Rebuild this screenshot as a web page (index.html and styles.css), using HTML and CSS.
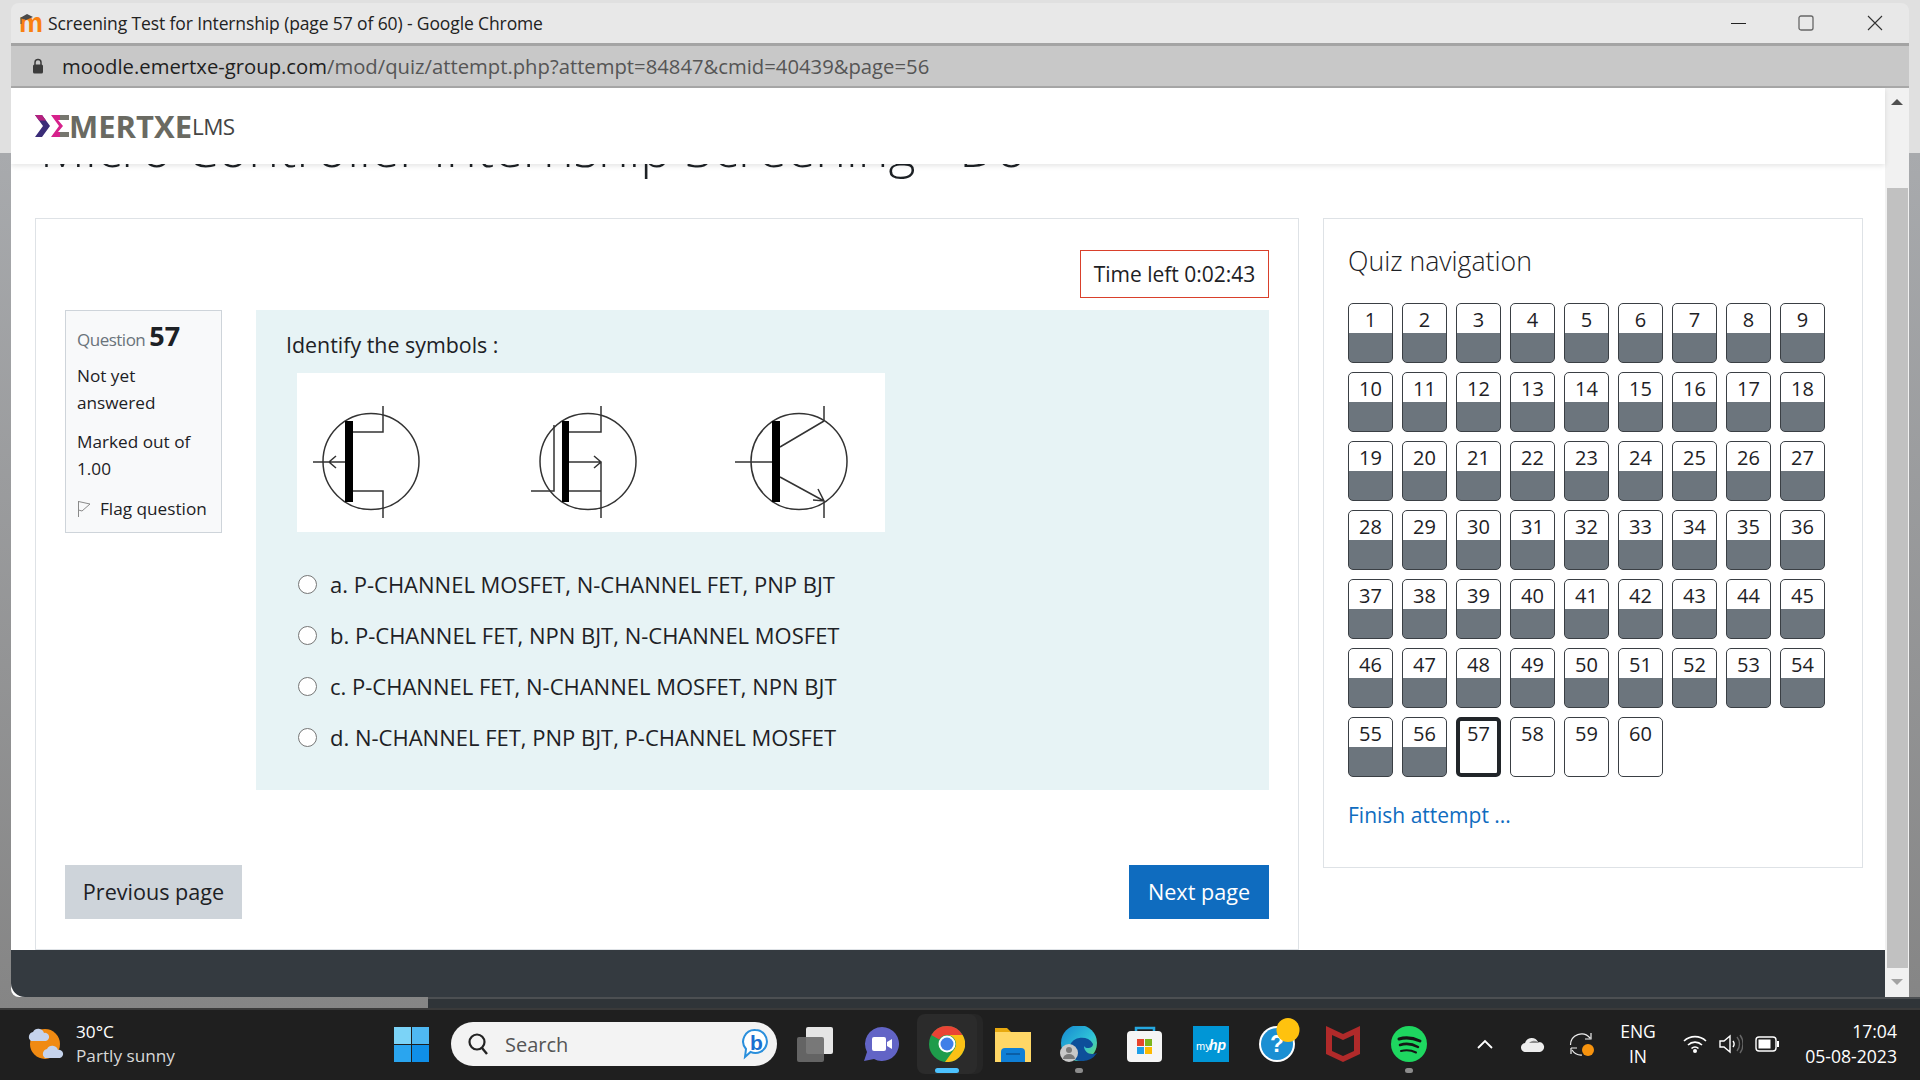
FILE: index.html
```html
<!DOCTYPE html>
<html>
<head>
	<meta http-equiv="Content-Type" content="text/html;charset=utf-8"/>
	<title>Screening Test for Internship (page 57 of 60)</title>
	<link rel="stylesheet" href="styles.css">
</head>
<body>
	<div class="window">
		<div class="titlebar">
			<svg class="favicon" width="24" height="22" viewBox="0 0 24 22">
				<text x="0" y="20" font-family="Liberation Sans" font-weight="700" font-size="27" fill="#f98012">m</text>
				<path d="M1 6l7-4 6 3-7 3z" fill="#4a4a4a"/>
				<path d="M2 6v6" stroke="#4a4a4a" stroke-width="1"/>
			</svg>
			<span class="title-text">Screening Test for Internship (page 57 of 60) - Google Chrome</span>
			<svg class="win-min" width="15" height="15" viewBox="0 0 15 15"><path d="M0 7.500h15" stroke="#222" stroke-width="1"/></svg>
			<svg class="win-max" width="16" height="16" viewBox="0 0 16 16"><rect x="1" y="1" width="14" height="14" rx="2" fill="none" stroke="#666" stroke-width="1.300"/></svg>
			<svg class="win-close" width="16" height="16" viewBox="0 0 16 16"><path d="M1 1l14 14M15 1L1 15" stroke="#333" stroke-width="1.100"/></svg>
		</div>
		<div class="addressbar">
			<svg width="12" height="16" viewBox="0 0 12 16"><path d="M3 7V4.500a3 3 0 0 1 6 0V7" fill="none" stroke="#3c3c3c" stroke-width="1.500"/><rect x="1" y="6.500" width="10" height="9" rx="1.500" fill="#3c3c3c"/></svg>
			<span class="url"><span class="url-host">moodle.emertxe-group.com</span>/mod/quiz/attempt.php?attempt=84847&amp;cmid=40439&amp;page=56</span>
		</div>
		<div class="viewport">
			<div class="page">
				<div class="header">
					<svg width="34" height="24" viewBox="0 0 34 24">
						<path d="M0 1h7l8 11-8 11H0l8-11z" fill="#3a2c78"/>
						<path d="M0 1h7l4 5.500H4z" fill="#b5217f"/>
						<path d="M16 1h18v5h-11l5 6-5 6h11v5H16l8-11z" fill="#d6228c"/>
						<path d="M25 1h9v5h-9zM25 18h9v5h-9z" fill="#77776f"/>
					</svg>
					<span class="logo-name">MERTXE</span><span class="logo-lms">LMS</span>
				</div>
				<div class="content">
					<h1 class="course-title">Micro Controller Internship Screening - Do</h1>
					<div class="columns">
						<div class="quiz-card">
							<div class="timer-row"><div class="timer">Time left 0:02:43</div></div>
							<div class="question">
								<div class="q-info">
									<div class="q-no">Question <b>57</b></div>
									<div class="q-state">Not yet answered</div>
									<div class="q-grade">Marked out of 1.00</div>
									<div class="q-flag">
										<svg width="14" height="18" viewBox="0 0 14 18"><path d="M1.500 1v16M1.500 1.500L13 4 5 11 1.500 10" fill="none" stroke="#8a8a8a" stroke-width="1"/></svg>
										Flag question
									</div>
								</div>
								<div class="q-body">
									<div class="q-text">Identify the symbols :</div>
									<svg class="symbols" width="588" height="159" viewBox="0 0 588 159">
										<g fill="none" stroke="#333" stroke-width="1.500">
											<circle cx="74" cy="88.500" r="48"/>
											<path d="M56 59h30V33M56 118h30v27M16 89h32M39 83l-7 6 7 6"/>
											<circle cx="291" cy="88.500" r="48"/>
											<path d="M271 59h33V33M271 89h33M297 83l7 6-7 6M304 89v56M271 118h33M234 118h23V52"/>
											<circle cx="502" cy="88.500" r="48"/>
											<path d="M438 89h37M483 74l44-26M527 33v15M483 104l44 24M527 128v17M521 116l6 12-11-1"/>
										</g>
										<rect x="48" y="48" width="8" height="81" fill="#000"/>
										<rect x="265" y="48" width="7" height="81" fill="#000"/>
										<rect x="475" y="48" width="8" height="81" fill="#000"/>
									</svg>
									<div class="answers">
										<label class="answer"><span class="radio"></span>a. P-CHANNEL MOSFET, N-CHANNEL FET, PNP BJT</label>
										<label class="answer"><span class="radio"></span>b. P-CHANNEL FET, NPN BJT, N-CHANNEL MOSFET</label>
										<label class="answer"><span class="radio"></span>c. P-CHANNEL FET, N-CHANNEL MOSFET, NPN BJT</label>
										<label class="answer"><span class="radio"></span>d. N-CHANNEL FET, PNP BJT, P-CHANNEL MOSFET</label>
									</div>
								</div>
							</div>
							<div class="page-buttons">
								<a class="btn btn-prev">Previous page</a>
								<a class="btn btn-next">Next page</a>
							</div>
						</div>
						<div class="nav-card">
							<div class="nav-title">Quiz navigation</div>
							<div class="nav-grid">
								<span class="qn seen">1</span><span class="qn seen">2</span><span class="qn seen">3</span><span class="qn seen">4</span><span class="qn seen">5</span><span class="qn seen">6</span><span class="qn seen">7</span><span class="qn seen">8</span><span class="qn seen">9</span>
								<span class="qn seen">10</span><span class="qn seen">11</span><span class="qn seen">12</span><span class="qn seen">13</span><span class="qn seen">14</span><span class="qn seen">15</span><span class="qn seen">16</span><span class="qn seen">17</span><span class="qn seen">18</span>
								<span class="qn seen">19</span><span class="qn seen">20</span><span class="qn seen">21</span><span class="qn seen">22</span><span class="qn seen">23</span><span class="qn seen">24</span><span class="qn seen">25</span><span class="qn seen">26</span><span class="qn seen">27</span>
								<span class="qn seen">28</span><span class="qn seen">29</span><span class="qn seen">30</span><span class="qn seen">31</span><span class="qn seen">32</span><span class="qn seen">33</span><span class="qn seen">34</span><span class="qn seen">35</span><span class="qn seen">36</span>
								<span class="qn seen">37</span><span class="qn seen">38</span><span class="qn seen">39</span><span class="qn seen">40</span><span class="qn seen">41</span><span class="qn seen">42</span><span class="qn seen">43</span><span class="qn seen">44</span><span class="qn seen">45</span>
								<span class="qn seen">46</span><span class="qn seen">47</span><span class="qn seen">48</span><span class="qn seen">49</span><span class="qn seen">50</span><span class="qn seen">51</span><span class="qn seen">52</span><span class="qn seen">53</span><span class="qn seen">54</span>
								<span class="qn seen">55</span><span class="qn seen">56</span><span class="qn current">57</span><span class="qn">58</span><span class="qn">59</span><span class="qn">60</span>
							</div>
							<a class="finish">Finish attempt ...</a>
						</div>
					</div>
				</div>
				<div class="footer"></div>
			</div>
			<div class="scrollbar">
				<div class="scroll-up"><span class="arrow-up"></span></div>
				<div class="scroll-thumb"></div>
				<div class="scroll-down"><span class="arrow-down"></span></div>
			</div>
		</div>
	</div>
	<div class="strip"></div>
	<div class="taskbar">
		<svg class="weather-icon" width="38" height="34" viewBox="0 0 38 34">
			<ellipse cx="17" cy="17" rx="15" ry="15" fill="#f08a12"/>
			<path d="M3 14a5 5 0 0 1 2-9 6 6 0 0 1 11 1 4 4 0 0 1 2 8z" fill="#c5d3ec"/>
			<path d="M17 31a5 5 0 0 1 2-9 6 6 0 0 1 11 1 4 4 0 0 1 2 8z" fill="#c5d3ec"/>
		</svg>
		<div class="weather-text">
			<div class="temp">30°C</div>
			<div class="sky">Partly sunny</div>
		</div>
		<svg class="start" width="35" height="35" viewBox="0 0 35 35">
			<rect width="17" height="17" fill="#7bd3f7"/><rect x="18" width="17" height="17" fill="#4fb8f2"/>
			<rect y="18" width="17" height="17" fill="#2aa5ef"/><rect x="18" y="18" width="17" height="17" fill="#0f8fe8"/>
		</svg>
		<div class="search">
			<svg width="22" height="24" viewBox="0 0 22 24"><circle cx="10" cy="10" r="7.500" fill="none" stroke="#222" stroke-width="2.200"/><path d="M15 16l5 6" stroke="#222" stroke-width="2.400"/></svg>
			<span class="search-text">Search</span>
			<svg class="bing" width="27" height="32" viewBox="0 0 27 32">
				<path d="M13.500 2a11.500 11.500 0 1 1-5 21.900L3 29l1-8A11.500 11.500 0 0 1 13.500 2z" fill="#fff" stroke="#2a8fdc" stroke-width="2"/>
				<text x="8" y="22" font-family="Liberation Sans" font-weight="700" font-size="21" fill="#1b6fd0">b</text>
			</svg>
		</div>
		<div class="slot">
			<svg width="36" height="36" viewBox="0 0 36 36"><rect x="9" y="1" width="27" height="27" rx="2" fill="#e6e6e6"/><rect y="11" width="27" height="25" rx="2" fill="#6b6b6b" opacity=".9"/></svg>
		</div>
		<div class="slot">
			<svg width="36" height="36" viewBox="0 0 36 36"><path d="M19 1a17 17 0 1 1-8 32l-10 2 3-9A17 17 0 0 1 19 1z" fill="#6264c6"/><rect x="9" y="11" width="14" height="14" rx="2" fill="#fff"/><path d="M24 16l5-3v10l-5-3z" fill="#fff"/></svg>
		</div>
		<div class="slot slot-active">
			<svg width="36" height="36" viewBox="0 0 36 36">
				<circle cx="18" cy="18" r="18" fill="#1e9c4b"/>
				<path d="M33.600 9A18 18 0 0 1 16 35.900L25.800 22.500A9 9 0 0 0 18 9z" fill="#fbc116"/>
				<path d="M18 0a18 18 0 0 1 15.600 9H18a9 9 0 0 0-7.800 4.500L2.400 9A18 18 0 0 1 18 0z" fill="#ea4335"/>
				<circle cx="18" cy="18" r="8.500" fill="#fff"/><circle cx="18" cy="18" r="6.500" fill="#3f7fe8"/>
			</svg>
			<span class="dot dot-on"></span>
		</div>
		<div class="slot">
			<svg width="36" height="36" viewBox="0 0 36 36"><path d="M0 2h12l4 4h20v30H0z" fill="#e8a90f"/><rect y="6" width="36" height="30" fill="#ffd766"/><path d="M6 36V26a4 4 0 0 1 4-4h16a4 4 0 0 1 4 4v10z" fill="#0f7fd6"/><rect x="11" y="27" width="14" height="2" fill="#0a5ea6"/></svg>
		</div>
		<div class="slot">
			<svg width="38" height="36" viewBox="0 0 38 36">
				<defs><linearGradient id="edge" x1="0" y1="0" x2="1" y2="1"><stop offset="0" stop-color="#1585d0"/><stop offset=".6" stop-color="#30c5d8"/><stop offset="1" stop-color="#72dc5f"/></linearGradient></defs>
				<circle cx="19" cy="17" r="18" fill="url(#edge)"/>
				<path d="M10 20a12 10 0 0 1 23-2c0 5-8 5-9 2 0 6 6 10 13 7a18 18 0 0 1-16 8C13 35 8 27 10 20z" fill="#0d4f9a"/>
				<circle cx="9" cy="27" r="9" fill="#c9c9c9"/><circle cx="9" cy="24" r="3" fill="#7a7a7a"/><path d="M3 33a6 5 0 0 1 12 0z" fill="#7a7a7a"/>
			</svg>
			<span class="dot"></span>
		</div>
		<div class="slot">
			<svg width="36" height="36" viewBox="0 0 36 36"><path d="M9 8V2h18v6" fill="none" stroke="#25a8e0" stroke-width="2.500"/><rect y="5" width="35" height="31" rx="4" fill="#f5f5f5"/><rect x="10" y="13" width="7" height="7" fill="#e8452c"/><rect x="18" y="13" width="7" height="7" fill="#7cb51c"/><rect x="10" y="21" width="7" height="7" fill="#1e9fe8"/><rect x="18" y="21" width="7" height="7" fill="#fdb900"/></svg>
		</div>
		<div class="slot">
			<svg width="36" height="36" viewBox="0 0 36 36"><rect width="36" height="36" fill="#0096d6"/><text x="3" y="24" font-family="Liberation Sans" font-size="11" fill="#fff">my</text><text x="16" y="24" font-family="Liberation Sans" font-style="italic" font-weight="700" font-size="14" fill="#fff">hp</text></svg>
		</div>
		<div class="slot slot-help">
			<svg width="48" height="44" viewBox="0 0 48 44">
				<circle cx="24" cy="26" r="18" fill="#fff"/><circle cx="24" cy="26" r="16" fill="#1b8fd3"/>
				<text x="17" y="34" font-family="Liberation Sans" font-weight="700" font-size="23" fill="#fff">?</text>
				<ellipse cx="35" cy="12" rx="11.500" ry="12" fill="#ffc20e"/>
			</svg>
		</div>
		<div class="slot">
			<svg width="34" height="36" viewBox="0 0 34 36"><path fill-rule="evenodd" d="M0 0l17 8 17-8v28l-17 8-17-8zM6 9v16l11 5 11-5V9l-11 5z" fill="#b02a2a"/></svg>
		</div>
		<div class="slot">
			<svg width="36" height="36" viewBox="0 0 36 36"><circle cx="18" cy="18" r="18" fill="#1ed760"/><g fill="none" stroke="#151515" stroke-linecap="round"><path d="M8 13q10-3 21 2" stroke-width="3"/><path d="M9 19q9-3 18 2" stroke-width="2.500"/><path d="M10 25q8-2 15 1.500" stroke-width="2"/></g></svg>
			<span class="dot"></span>
		</div>
		<svg class="tray-up" width="16" height="10" viewBox="0 0 16 10"><path d="M1 9l7-7 7 7" fill="none" stroke="#fff" stroke-width="1.800"/></svg>
		<svg class="tray-cloud" width="24" height="16" viewBox="0 0 24 16"><path d="M5 16a4.500 4.500 0 0 1-1-9 7 7 0 0 1 13-1 5 5 0 0 1 2 10z" fill="#ededed"/><path d="M8 7a7 7 0 0 1 9-1 5 5 0 0 1 2 1z" fill="#8c8c8c"/></svg>
		<svg class="tray-sync" width="25" height="24" viewBox="0 0 25 24"><g fill="none" stroke="#eee" stroke-width="1.200"><path d="M1.500 13A11 11 0 0 1 21 6M22 1v6h-6"/><path d="M2 16v6M2 16h6"/><path d="M3 18a11 11 0 0 0 10 5"/></g><circle cx="19" cy="18" r="6" fill="#f7930e"/></svg>
		<div class="tray-lang"><div>ENG</div><div>IN</div></div>
		<svg class="tray-wifi" width="24" height="18" viewBox="0 0 24 18"><g fill="none" stroke="#fff" stroke-width="1.600"><path d="M1 6a16 16 0 0 1 22 0"/><path d="M5 10a10 10 0 0 1 14 0"/><path d="M8.500 13.500a5 5 0 0 1 7 0"/></g><circle cx="12" cy="16" r="2" fill="#fff"/></svg>
		<svg class="tray-vol" width="24" height="20" viewBox="0 0 24 20"><path d="M1 7h4l6-5v16l-6-5H1z" fill="none" stroke="#fff" stroke-width="1.400"/><path d="M14 7a5 5 0 0 1 0 6" fill="none" stroke="#fff" stroke-width="1.400"/><path d="M18 3a11 11 0 0 1 0 14M21 1a15 15 0 0 1 0 18" fill="none" stroke="#666" stroke-width="1.400"/></svg>
		<svg class="tray-bat" width="24" height="16" viewBox="0 0 24 16"><rect x="1" y="1" width="20" height="14" rx="3" fill="none" stroke="#fff" stroke-width="1.400"/><rect x="3.500" y="3.500" width="12" height="9" fill="#fff"/><rect x="22" y="5" width="2" height="6" fill="#fff"/></svg>
		<div class="clock"><div>17:04</div><div>05-08-2023</div></div>
	</div>
</body>
</html>
```

FILE: styles.css
```css
*{
	margin: 0;
	padding: 0;
	box-sizing: border-box;
	text-decoration: none;
}
body{
	width: 1920px;
	height: 1080px;
	overflow: hidden;
	display: flex;
	flex-direction: column;
	font-family: "Open Sans", "Noto Sans", sans-serif;
	color: #1d2125;
	background: linear-gradient(#e0e0e0 0, #e0e0e0 153px, #a8aaad 153px, #858585 1008px);
}
.window{
	height: 994px;
	margin: 3px 11px 0 11px;
	display: flex;
	flex-direction: column;
	border-radius: 8px 8px 0 8px;
	overflow: hidden;
}
.titlebar{
	height: 40px;
	display: flex;
	align-items: center;
	padding-left: 8px;
	background: #e8e8e8;
}
.favicon{
	overflow: visible;
}
.title-text{
	margin-left: 5px;
	font-size: 17.5px;
	letter-spacing: -.12px;
	color: #222;
}
.win-min{
	margin-left: auto;
}
.win-max{
	margin-left: 52px;
}
.win-close{
	margin-left: 53px;
	margin-right: 26px;
}
.addressbar{
	height: 45px;
	display: flex;
	align-items: center;
	padding-left: 21px;
	background: #c8c8c8;
	border-top: 3px solid #a4a4a4;
	border-bottom: 2px solid #a8a8a8;
}
.url{
	margin-left: 18px;
	font-size: 20.25px;
	color: #555;
}
.url-host{
	color: #1f1f1f;
}
.viewport{
	flex: 1;
	display: flex;
	min-height: 0;
}
.page{
	flex: 1;
	display: flex;
	flex-direction: column;
	background: #fff;
}
.header{
	height: 76px;
	display: flex;
	align-items: center;
	padding-left: 24px;
	background: #fff;
	position: relative;
	z-index: 1;
	box-shadow: 0 2px 5px rgba(0,0,0,.1);
}
.logo-name{
	font-size: 31px;
	font-weight: 700;
	color: #6a6a62;
}
.logo-lms{
	font-size: 22.5px;
	letter-spacing: -.6px;
	color: #444;
}
.content{
	flex: 1;
	min-height: 0;
	overflow: hidden;
}
.course-title{
	height: 60px;
	margin: -47px 0 41px 29px;
	font-size: 52px;
	line-height: 60px;
	font-weight: 300;
	white-space: nowrap;
	color: #1d2125;
}
.columns{
	display: flex;
	align-items: flex-start;
	gap: 24px;
	padding-left: 24px;
}
.quiz-card{
	width: 1264px;
	height: 732px;
	padding: 31px 29px 0 29px;
	border: 1px solid #dee2e6;
}
.timer-row{
	display: flex;
	justify-content: flex-end;
	margin-bottom: 12px;
}
.timer{
	width: 189px;
	height: 48px;
	line-height: 46px;
	text-align: center;
	font-size: 21px;
	border: 1.5px solid #d9402b;
}
.question{
	display: flex;
	align-items: flex-start;
	gap: 34px;
}
.q-info{
	width: 157px;
	height: 223px;
	flex-shrink: 0;
	padding: 7px 11px 0 11px;
	background: #f8f9fa;
	border: 1px solid #ced4da;
	font-size: 17.2px;
	line-height: 27px;
}
.q-no{
	color: #6a737b;
	font-size: 17px;
	letter-spacing: -.5px;
	line-height: 36px;
}
.q-no b{
	font-size: 27px;
	color: #1d2125;
	letter-spacing: 0;
}
.q-state{
	margin-top: 4px;
}
.q-grade{
	margin-top: 12px;
}
.q-flag{
	margin-top: 13px;
	white-space: nowrap;
	display: flex;
	align-items: center;
	gap: 9px;
}
.q-body{
	width: 1013px;
	height: 480px;
	padding-top: 21px;
	background: #e7f3f5;
}
.q-text{
	margin-left: 30px;
	height: 28px;
	line-height: 28px;
	font-size: 21.4px;
	margin-bottom: 14px;
}
.symbols{
	display: block;
	margin-left: 41px;
	background: #fff;
}
.answers{
	margin-top: 32px;
	margin-left: 42px;
	display: flex;
	flex-direction: column;
	gap: 11px;
}
.answer{
	height: 40px;
	display: flex;
	align-items: center;
	gap: 13px;
	font-size: 22px;
}
.radio{
	width: 19px;
	height: 19px;
	border-radius: 50%;
	background: #fff;
	border: 1.5px solid #767676;
}
.page-buttons{
	display: flex;
	justify-content: space-between;
	margin-top: 75px;
}
.btn{
	height: 54px;
	line-height: 54px;
	text-align: center;
	font-size: 21.6px;
}
.btn-prev{
	width: 177px;
	background: #ced4da;
}
.btn-next{
	width: 140px;
	background: #0f6cbf;
	color: #fff;
}
.nav-card{
	width: 540px;
	height: 650px;
	padding: 24px 24px 0 24px;
	border: 1px solid #dee2e6;
}
.nav-title{
	height: 36px;
	line-height: 36px;
	margin-bottom: 24px;
	font-size: 26.7px;
	font-weight: 300;
}
.nav-grid{
	display: grid;
	grid-template-columns: repeat(9, 45px);
	grid-auto-rows: 60px;
	gap: 9px;
}
.qn{
	text-align: center;
	font-size: 20px;
	line-height: 32px;
	border: 1px solid #3a3f44;
	border-radius: 5px;
	background: #fff;
}
.qn.seen{
	background: linear-gradient(#fff 29px, #6c757d 29px);
}
.qn.current{
	border: 4px solid #212529;
	line-height: 25px;
}
.finish{
	display: block;
	margin-top: 23px;
	height: 30px;
	line-height: 30px;
	font-size: 21px;
	color: #0f6cbf;
}
.footer{
	height: 47px;
	background: #343a40;
	border-radius: 0 0 0 14px;
}
.scrollbar{
	width: 24px;
	display: flex;
	flex-direction: column;
	align-items: center;
	background: #f1f1f1;
}
.scroll-up{
	height: 100px;
	padding-top: 11px;
}
.arrow-up{
	display: block;
	border: 6px solid transparent;
	border-top: 0;
	border-bottom: 6px solid #505050;
}
.scroll-thumb{
	width: 21px;
	height: 780px;
	background: #c1c1c1;
}
.scroll-down{
	height: 29px;
	padding-top: 11px;
}
.arrow-down{
	display: block;
	border: 6px solid transparent;
	border-bottom: 0;
	border-top: 6px solid #a3a3a3;
}
.strip{
	height: 11px;
	margin-left: 428px;
	background: #2f3438;
	border-top: 2px solid #4c4f52;
}
.taskbar{
	height: 72px;
	display: flex;
	align-items: center;
	padding-bottom: 2px;
	background: #1f1f1f;
	border-top: 2px solid #3a3a3a;
	color: #fff;
}
.weather-icon{
	margin-left: 28px;
}
.weather-text{
	margin-left: 10px;
	width: 120px;
	font-size: 17.2px;
	line-height: 24px;
}
.sky{
	color: #d8d8d8;
}
.start{
	margin-left: 198px;
}
.search{
	width: 326px;
	height: 44px;
	margin-left: 22px;
	margin-right: 5px;
	display: flex;
	align-items: center;
	padding-left: 16px;
	background: #f3f3f3;
	border-radius: 22px;
}
.search-text{
	margin-left: 16px;
	font-size: 20px;
	color: #555;
}
.bing{
	margin-left: auto;
	margin-right: 8px;
}
.slot{
	width: 66px;
	height: 60px;
	padding-top: 12px;
	display: flex;
	flex-direction: column;
	align-items: center;
	border-radius: 8px;
}
.slot svg{
	flex-shrink: 0;
}
.slot-help{
	padding-top: 4px;
}
.slot-active{
	width: 60px;
	margin: 0 3px;
	background: #2b2b2b;
	box-shadow: 6px 0 0 #262626;
}
.dot{
	width: 8px;
	height: 5px;
	margin-top: 6px;
	border-radius: 3px;
	background: #8c8c8c;
}
.dot-on{
	width: 24px;
	background: #4cc2ff;
}
.tray-up{
	margin-left: 35px;
}
.tray-cloud{
	margin-left: 28px;
}
.tray-sync{
	margin-left: 24px;
}
.tray-lang{
	width: 44px;
	margin-left: 22px;
	text-align: center;
	font-size: 17.5px;
	line-height: 25px;
}
.tray-wifi{
	margin-left: 23px;
}
.tray-vol{
	margin-left: 12px;
}
.tray-bat{
	margin-left: 12px;
}
.clock{
	margin-left: auto;
	padding-right: 23px;
	text-align: right;
	font-size: 17.6px;
	line-height: 25px;
}
```
